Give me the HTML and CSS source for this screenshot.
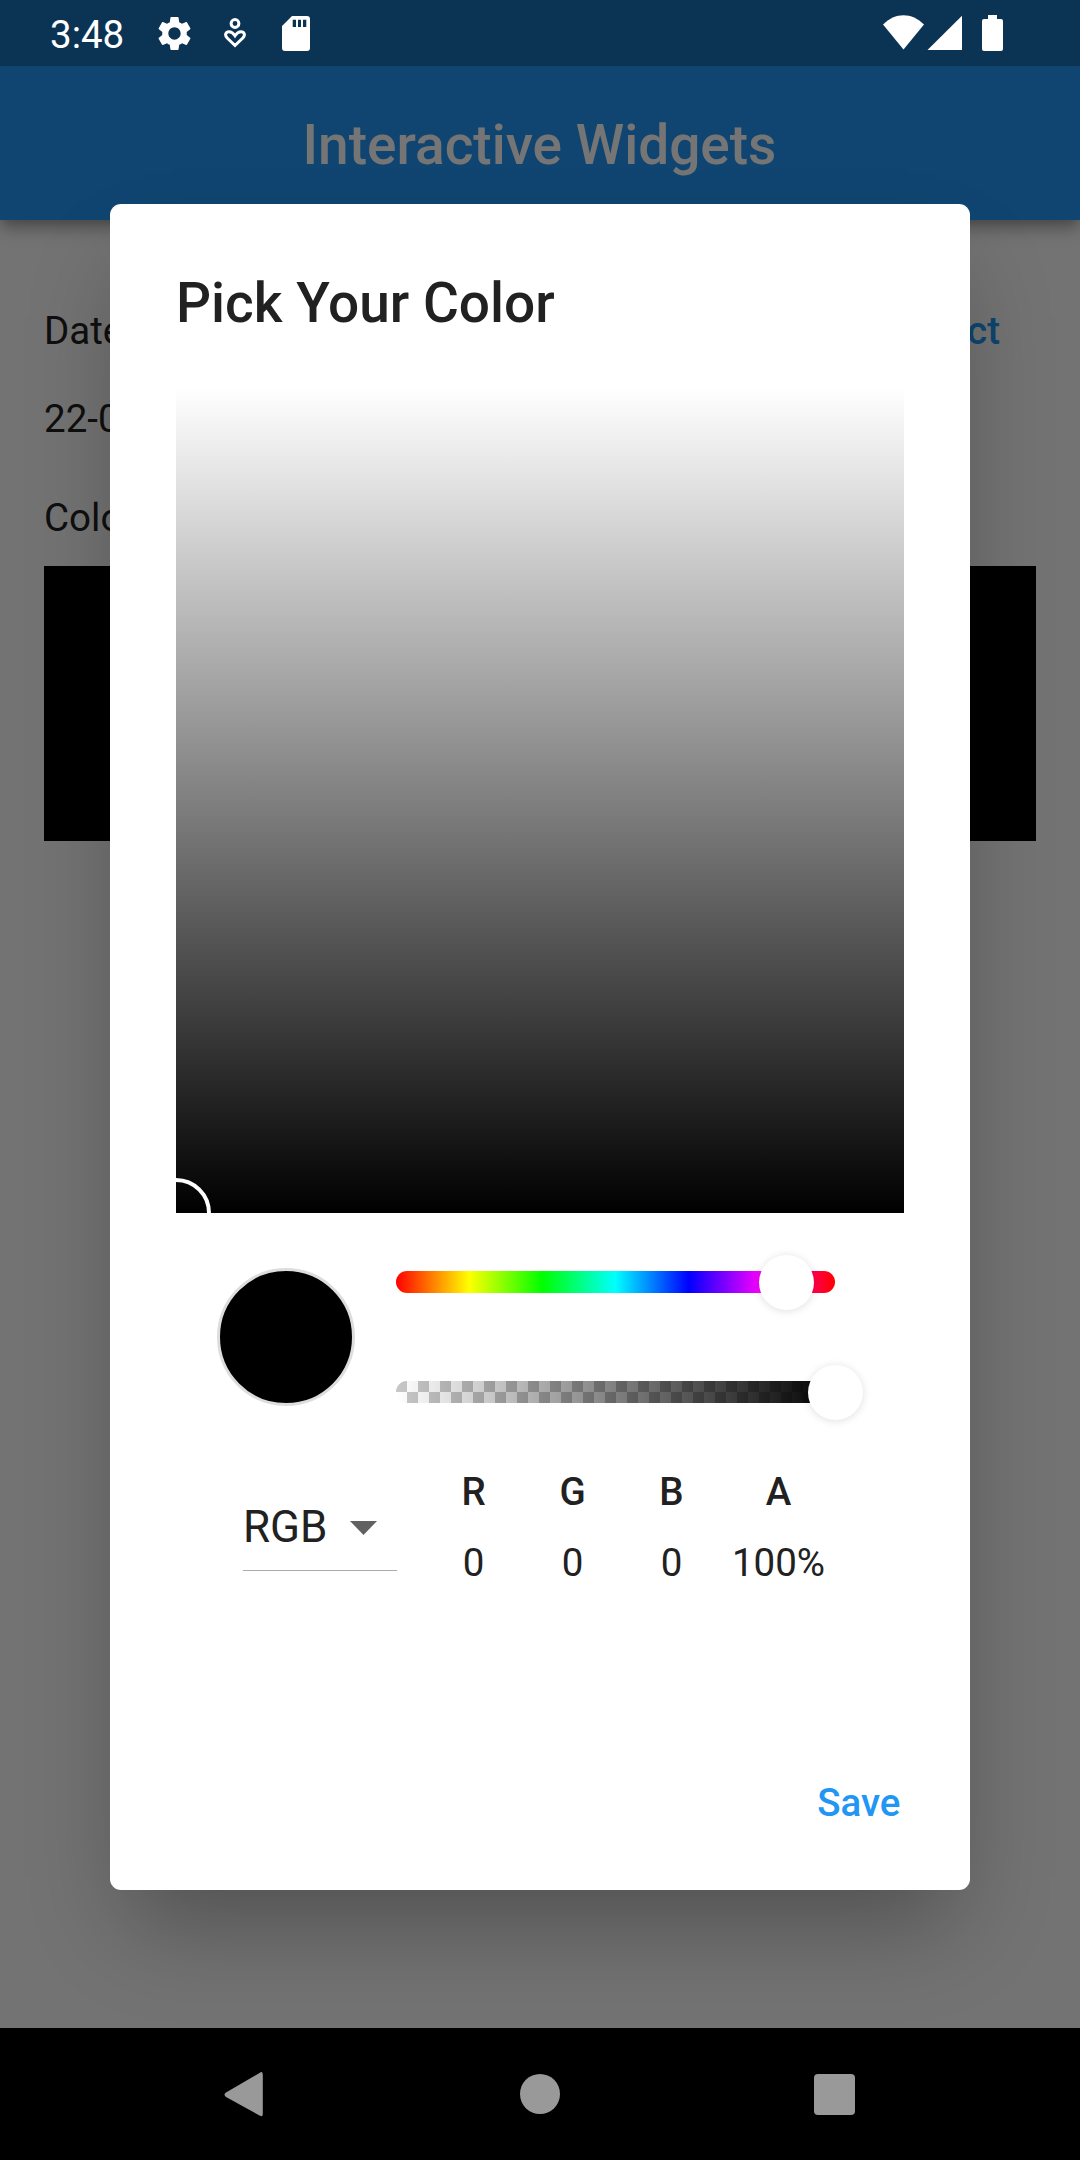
FILE: index.html
```html
<!DOCTYPE html>
<html lang="en">
<head>
<meta charset="utf-8">
<title>Interactive Widgets</title>
<link rel="stylesheet" href="styles.css">
</head>
<body>
<div class="screen">
  <div class="app">
    <header class="appbar"><h1 class="appbar-title">Interactive Widgets</h1></header>
    <main class="content">
      <div class="row"><span>Date</span><span class="link">Select</span></div>
      <div class="date">22-07-2022</div>
      <div class="color-label">Color</div>
      <div class="color-box"></div>
    </main>
  </div>

  <div class="scrim">
    <section class="dialog" role="dialog">
      <h2 class="dialog-title">Pick Your Color</h2>
      <div class="shade"><div class="marker"></div></div>
      <div class="controls">
        <div class="swatch"></div>
        <div class="sliders">
          <div class="track hue"><span class="thumb thumb-hue"></span></div>
          <div class="track alpha"><span class="thumb thumb-alpha"></span></div>
        </div>
      </div>
      <div class="values">
        <div class="select">
          <span>RGB</span>
          <svg class="caret" viewBox="0 0 27 14"><path d="M0 0H27L13.5 14Z"/></svg>
        </div>
        <div class="channel"><b>R</b><span>0</span></div>
        <div class="channel"><b>G</b><span>0</span></div>
        <div class="channel"><b>B</b><span>0</span></div>
        <div class="channel channel-alpha"><b>A</b><span>100%</span></div>
      </div>
      <div class="actions"><span class="save">Save</span></div>
    </section>
  </div>

  <div class="statusbar">
    <span class="time">3:48</span>
    <svg class="gear" viewBox="0 0 24 24"><path d="M19.14 12.94c.04-.3.06-.61.06-.94 0-.32-.02-.64-.07-.94l2.03-1.58c.18-.14.23-.41.12-.61l-1.92-3.32c-.12-.22-.37-.29-.59-.22l-2.39.96c-.5-.38-1.03-.7-1.62-.94l-.36-2.54c-.04-.24-.24-.41-.48-.41h-3.84c-.24 0-.43.17-.47.41l-.36 2.54c-.59.24-1.13.57-1.62.94l-2.39-.96c-.22-.08-.47 0-.59.22L2.74 8.87c-.12.21-.08.47.12.61l2.03 1.58c-.05.3-.09.63-.09.94s.02.64.07.94l-2.03 1.58c-.18.14-.23.41-.12.61l1.92 3.32c.12.22.37.29.59.22l2.39-.96c.5.38 1.03.7 1.62.94l.36 2.54c.05.24.24.41.48.41h3.84c.24 0 .44-.17.47-.41l.36-2.54c.59-.24 1.13-.56 1.62-.94l2.39.96c.22.08.47 0 .59-.22l1.92-3.32c.12-.22.07-.47-.12-.61l-2.01-1.58zM12 15.6c-1.98 0-3.6-1.62-3.6-3.6s1.62-3.6 3.6-3.6 3.6 1.62 3.6 3.6-1.62 3.6-3.6 3.6z"/></svg>
    <svg class="wellbeing" viewBox="0 0 22 30"><circle cx="11" cy="5.5" r="3.9"/><path d="M11 27.500 3.200 20C.2 16.800 1.800 13.700 5 13.700c2.700 0 4.500 1.800 6 4.100 1.500-2.300 3.300-4.100 6-4.100 3.200 0 4.800 3.100 1.800 6.300Z"/></svg>
    <svg class="sdcard" viewBox="0 0 28 35"><path fill-rule="evenodd" d="M10 0H25Q28 0 28 3V32Q28 35 25 35H3Q0 35 0 32V10ZM10.700 3.700V11H14V3.700ZM16 3.700V11H19V3.700ZM21 3.700V11H24.300V3.700Z"/></svg>
    <svg class="network" viewBox="0 0 120 36"><path d="M0 9.500C12-3 29-3 41 9.500L20.500 34.500Z"/><path d="M44.500 35 79 .7V35Z"/><path d="M105 0h9v4h4q2 0 2 2v28q0 2-2 2h-17q-2 0-2-2V6q0-2 2-2h4Z"/></svg>
  </div>

  <nav class="navbar">
    <svg viewBox="0 0 1080 132"><path d="M262.800 46.700V85.700Q262.800 89.700 259.500 87.500L226 69Q223 66.800 226 64.600L259.500 44.900Q262.800 42.700 262.800 46.700Z"/><circle cx="540" cy="66" r="20"/><rect x="814" y="46" width="41" height="41" rx="4"/></svg>
  </nav>
</div>
</body>
</html>
```
FILE: styles.css
```css
* { box-sizing: border-box; }

body {
  margin: 0;
  background: #000;
  font-family: Roboto, "Noto Sans", sans-serif;
  font-size: 38.5px;
  line-height: 44px;
  color: #212121;
}

.screen {
  position: relative;
  width: 1080px;
  height: 2160px;
  overflow: hidden;
  display: flex;
  flex-direction: column;
}

.app { flex: 1; background: #fafafa; }

.appbar {
  height: 220px;
  padding: 70px 1px 0 0;
  display: flex;
  align-items: center;
  justify-content: center;
  background: #2196f3;
  box-shadow: 0 5px 11px -3px rgba(0, 0, 0, .25), 0 11px 14px rgba(0, 0, 0, .15), 0 3px 27px rgba(0, 0, 0, .12);
}

.appbar-title {
  margin: 0;
  font-size: 55px;
  line-height: 66px;
  font-weight: 500;
  color: #fff;
}

.content { padding: 89px 44px 0; }
.row { display: flex; justify-content: space-between; padding-right: 36px; }
.link { color: #2196f3; font-weight: 500; }
.date { margin-top: 44px; }
.color-label { margin-top: 55px; }
.color-box { margin-top: 26px; height: 275px; background: #000; }

.scrim {
  position: absolute;
  inset: 0 0 132px;
  padding-top: 204px;
  background: rgba(0, 0, 0, .54);
}

.dialog {
  width: 860px;
  height: 1685.500px;
  margin: 0 auto;
  padding: 66px 66px 0;
  border-radius: 11px;
  background: #fff;
  box-shadow: 0 50px 90px -18px rgba(0, 0, 0, .3);
}

.dialog-title {
  margin: 0;
  font-size: 55px;
  line-height: 66px;
  font-weight: 500;
}

.shade {
  position: relative;
  height: 825px;
  margin-top: 52px;
  overflow: hidden;
  background: linear-gradient(#fff, #000);
}

.marker {
  position: absolute;
  left: -35px;
  bottom: -35px;
  width: 70px;
  height: 70px;
  border: 4px solid #fff;
  border-radius: 50%;
}

.controls {
  display: flex;
  gap: 41px;
  padding: 55px 69px 0 41px;
}

.swatch {
  width: 138px;
  height: 138px;
  border: 3px solid #ddd;
  border-radius: 50%;
  background: #000;
}

.sliders {
  flex: 1;
  display: flex;
  flex-direction: column;
  gap: 88px;
  padding-top: 3px;
}

.track { position: relative; height: 22px; border-radius: 11px; }
.hue { background: linear-gradient(90deg, #f00, #ff0, #0f0, #0ff, #00f, #f0f, #f00); }
.alpha {
  border-radius: 11px 0 0 11px;
  background:
    linear-gradient(90deg, transparent, #000),
    conic-gradient(#fff 25%, #c8c8c8 0 50%, #fff 0 75%, #c8c8c8 0) 0 0 / 22px 22px;
}

.thumb {
  position: absolute;
  top: -16.500px;
  width: 55px;
  height: 55px;
  border-radius: 50%;
  background: #fff;
  box-shadow: 0 1px 9px rgba(0, 0, 0, .13);
}
.thumb-hue { left: 362.500px; }
.thumb-alpha { left: 412px; }

.values {
  display: flex;
  padding: 64px 0 0 67px;
}

.select {
  display: flex;
  align-items: center;
  gap: 22.500px;
  width: 154px;
  height: 88px;
  margin: 13px 27px 0 0;
  padding-top: 1px;
  border-bottom: 1px solid #aaa;
  font-size: 44px;
}

.caret { width: 27px; height: 14px; margin-top: 2px; fill: #616161; }

.channel {
  display: flex;
  flex-direction: column;
  align-items: center;
  gap: 27px;
  width: 99px;
}
.channel b { font-weight: 500; }
.channel-alpha { width: 115px; }

.actions {
  display: flex;
  justify-content: flex-end;
  padding: 196px 3.500px 0 0;
}
.save { color: #2196f3; font-weight: 500; }

.statusbar {
  position: absolute;
  inset: 0 0 auto;
  height: 66px;
  display: flex;
  align-items: flex-start;
  background: rgba(0, 0, 0, .25);
  color: #fff;
  fill: #fff;
}

.time { margin: 13px 0 0 50px; width: 104px; }
.gear { width: 41px; height: 41px; margin-top: 13px; }
.wellbeing {
  width: 22px;
  height: 30px;
  margin: 18px 0 0 29px;
  fill: none;
  stroke: #fff;
  stroke-width: 3;
}
.sdcard { width: 28px; height: 35px; margin: 16px 0 0 36px; }
.network { width: 120px; height: 36px; margin: 15px 77px 0 auto; }

.navbar { height: 132px; background: #000; }
.navbar svg { display: block; width: 100%; height: 132px; fill: #999; }
```
